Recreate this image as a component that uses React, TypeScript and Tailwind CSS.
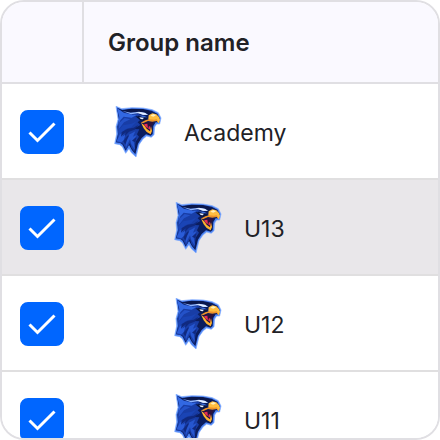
import { useState } from "react";

const groups = [
  { id: "academy", name: "Academy", nested: false },
  { id: "u13", name: "U13", nested: true },
  { id: "u12", name: "U12", nested: true },
  { id: "u11", name: "U11", nested: true },
];

export default function App() {
  const [selected, setSelected] = useState<string[]>(groups.map((g) => g.id));

  const toggle = (id: string) =>
    setSelected((ids) => (ids.includes(id) ? ids.filter((i) => i !== id) : [...ids, id]));

  return (
    <div className="h-screen bg-white">
      <div className="h-full overflow-hidden rounded-3xl border-2 border-[#e0dfe3] bg-white font-['Inter',sans-serif] text-[#212126]">
        <table className="w-full table-fixed border-separate border-spacing-0">
          <thead>
            <tr className="bg-[#faf9ff]">
              <th aria-label="Selected" className="h-[82px] w-[82px] border-r-2 border-b-2 border-[#e0dfe3] p-0" />
              <th className="border-b-2 border-[#e0dfe3] px-6 pt-0.5 pb-0 text-left text-2xl font-semibold">Group name</th>
            </tr>
          </thead>
          <tbody>
            {groups.map((group) => (
              <GroupRow
                key={group.id}
                group={group}
                checked={selected.includes(group.id)}
                onToggle={() => toggle(group.id)}
              />
            ))}
          </tbody>
        </table>
      </div>
    </div>
  );
}

type GroupRowProps = {
  group: (typeof groups)[0];
  checked: boolean;
  onToggle: () => void;
};

function GroupRow({ group, checked, onToggle }: GroupRowProps) {
  return (
    <tr className={group.id === "u13" ? "bg-[#e9e7ea]" : "bg-white"}>
      <td className="h-24 py-0 pr-0 pl-[18px] shadow-[inset_0_-2px_0_#e0dfe0]">
        <div className="relative size-11">
          <input
            id={group.id}
            type="checkbox"
            checked={checked}
            onChange={onToggle}
            className="block size-11 cursor-pointer appearance-none rounded-lg border-2 border-[#b9b8c0] bg-white checked:border-[#0066ff] checked:bg-[#0066ff]"
          />
          {checked && (
            <svg className="pointer-events-none absolute inset-0 size-11" viewBox="0 0 44 44" fill="none" stroke="white" strokeWidth={3}>
              <path d="M9.5 22.5l8 8L34.500 13.500" />
            </svg>
          )}
        </div>
      </td>
      <td className="h-24 p-0 shadow-[inset_0_-2px_0_#e0dfe0]">
        <label
          htmlFor={group.id}
          className={`flex cursor-pointer items-center gap-5 ${group.nested ? "pl-[88px]" : "pl-7"}`}
        >
          <EagleLogo />
          <span className="pt-0.5 text-[23px] leading-8">{group.name}</span>
        </label>
      </td>
    </tr>
  );
}

/* ── Club crest: screaming eagle head ── */
function EagleLogo() {
  return (
    <svg className="h-14 w-[52px] shrink-0" viewBox="37 28 156 168" aria-hidden="true">
      {/* blue rim */}
      <path
        d="M49 35L66 42L96 39L130 40L158 45L176 54L184 70L180 88L171 88L165 97L163 120L155 128L141 124L130 133L118 150L109 187L95 174L88 162L78 176L68 156L60 150L45 147L51 118L49 96L55 74Z"
        fill="#4f86f5"
        stroke="#7fabff"
        strokeWidth={2}
        strokeLinejoin="round"
      />
      {/* dark head */}
      <path
        d="M52 39L68 46L96 42L130 43L156 48L173 57L180 71L177 83L168 83L161 94L159 118L153 123L139 119L126 130L115 147L107 179L97 167L88 151L78 168L69 150L61 144L49 143L55 118L53 96L58 75Z"
        fill="#0b1d5e"
      />
      {/* crown and neck feathers */}
      <path d="M52 40L70 53L98 59L122 56L113 68L124 74L114 83L122 91L101 103L119 104L112 119L118 126L108 141L104 171L95 159L91 145L79 165L70 147L50 142L56 117L54 96L60 76Z" fill="#183da6" />
      <path d="M52 40L72 54L98 60L112 60L96 69L72 66L62 77L55 94L59 67Z" fill="#3268e2" />
      <path d="M59 84L75 70L92 74L73 83L57 104Z" fill="#2452c8" />
      <path d="M55 109L70 92L96 87L111 80L95 98L76 104L58 126Z" fill="#1a44b5" />
      <path d="M51 140L60 120L77 108L68 126L77 120L72 137L65 143Z" fill="#2a5cd8" />
      <path d="M76 141L88 120L107 110L100 126L111 121L102 139L106 166L95 149L91 134L79 158Z" fill="#2656cf" />
      {/* feather shadows */}
      <path d="M66 112L84 102L102 99L116 90L105 105L88 111L76 124L78 113L64 126Z" fill="#10297f" />
      <path d="M71 139L83 124L89 121L82 136L77 150ZM97 138L106 130L111 128L107 143Z" fill="#10297f" />
      {/* brow highlight */}
      <path d="M70 47L96 43L125 44L149 50L158 58L145 63L126 53L101 52L83 51Z" fill="#0a174b" />
      <path d="M68 49L93 54L118 51L136 54L146 61L130 61L116 56L94 59Z" fill="#8db4ff" />
      <path d="M108 54L120 52L136 55L144 60L131 60L118 56Z" fill="#e6efff" />
      <path d="M107 65L131 66L143 71L138 80L122 77Z" fill="#09153f" />
      <path d="M116 62L133 63L142 68L130 68Z" fill="#3c70de" />
      <path d="M119 68L132 69L130 74L123 73Z" fill="#e7efff" />
      {/* beak */}
      <path d="M147 62L158 56L170 59L178 67L181 75L177 86L171 78L160 79L148 79L146 72Z" fill="#ffbd3f" />
      <path d="M152 63L161 58L169 62L161 66Z" fill="#fff0ba" />
      <path d="M148 74L163 75L171 74L177 83L171 79L158 81L145 79L132 85L123 84L137 77Z" fill="#ed9128" />
      {/* open mouth */}
      <path d="M129 86L147 82L163 82L155 97L154 110L139 101Z" fill="#2b123b" />
      <path d="M133 89L143 87L145 100L139 98ZM147 96L151 94L153 105L146 102Z" fill="#e52c55" />
      <path d="M124 84L133 91L141 102L151 110L154 95L157 109L153 119L141 112L132 101Z" fill="#ffb12d" />
    </svg>
  );
}
